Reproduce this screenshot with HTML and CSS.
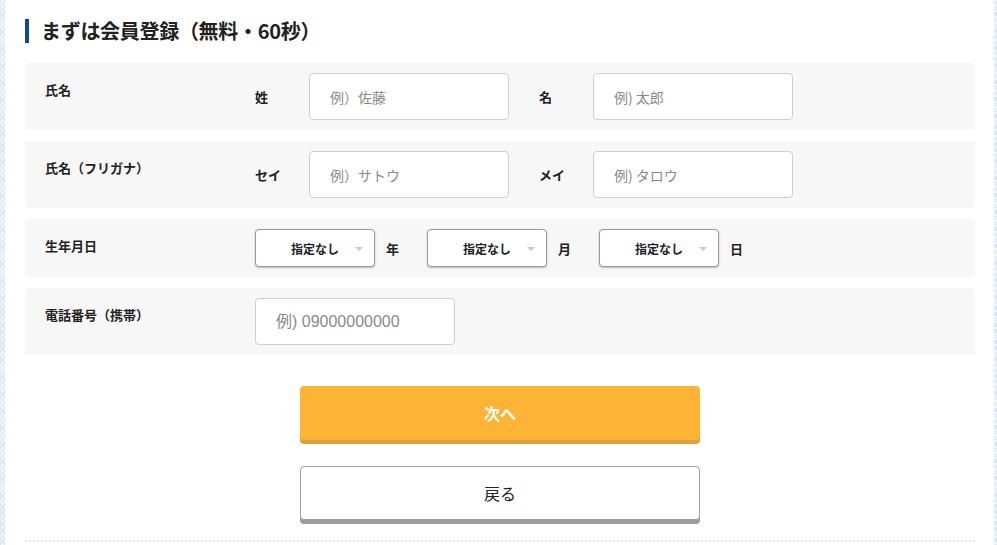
FILE: index.html
```html
<!DOCTYPE html>
<html lang="ja">
<head>
<meta charset="utf-8">
<link rel="stylesheet" href="styles.css">
</head>
<body>
<div class="page">
  <div class="edge edge-left"></div>
  <main class="content">
    <h2 class="heading">まずは会員登録（無料・60秒）</h2>
    <div class="rows">
      <div class="row">
        <div class="row-label">氏名</div>
        <div class="fields">
          <span class="sub-label">姓</span>
          <input class="text-input" type="text" placeholder="例）佐藤">
          <span class="sub-label second">名</span>
          <input class="text-input" type="text" placeholder="例) 太郎">
        </div>
      </div>
      <div class="row">
        <div class="row-label">氏名（フリガナ）</div>
        <div class="fields">
          <span class="sub-label">セイ</span>
          <input class="text-input" type="text" placeholder="例）サトウ">
          <span class="sub-label second">メイ</span>
          <input class="text-input" type="text" placeholder="例) タロウ">
        </div>
      </div>
      <div class="row">
        <div class="row-label">生年月日</div>
        <div class="fields">
          <div class="select"><span>指定なし</span><i class="caret"></i></div>
          <span class="unit">年</span>
          <div class="select"><span>指定なし</span><i class="caret"></i></div>
          <span class="unit">月</span>
          <div class="select"><span>指定なし</span><i class="caret"></i></div>
          <span class="unit">日</span>
        </div>
      </div>
      <div class="row">
        <div class="row-label">電話番号（携帯）</div>
        <div class="fields">
          <input class="text-input phone" type="text" placeholder="例) 09000000000">
        </div>
      </div>
    </div>
    <div class="actions">
      <button class="btn btn-next">次へ</button>
      <button class="btn btn-back">戻る</button>
    </div>
    <div class="dots"></div>
  </main>
  <div class="edge edge-right"></div>
</div>
</body>
</html>
```

FILE: styles.css
```css
html, body {
  margin: 0;
  padding: 0;
  background: #fff;
}
body {
  font-family: "Noto Sans CJK JP", "Noto Sans", sans-serif;
  color: #222;
}
.page {
  display: flex;
  width: 997px;
  height: 545px;
  overflow: hidden;
}
.edge {
  flex: none;
  background-color: #f1f6fd;
  background-image:
    repeating-linear-gradient(45deg, #d6e5f8 0 1px, transparent 1px 4px),
    repeating-linear-gradient(-45deg, #d6e5f8 0 1px, transparent 1px 4px);
}
.edge-left { width: 5px; }
.edge-right { width: 3px; margin-left: auto; }
.content {
  width: 950px;
  padding: 0 0 0 20px;
  display: flex;
  flex-direction: column;
}
.heading {
  margin: 19px 0 0 0;
  height: 24px;
  border-left: 4px solid #0e4a98;
  padding-left: 12px;
  font-size: 20px;
  line-height: 24px;
  font-weight: 700;
  color: #222;
  letter-spacing: -0.3px;
}
.rows {
  margin-top: 20px;
  display: flex;
  flex-direction: column;
  gap: 11px;
}
.row {
  display: flex;
  background: #f7f7f7;
  border-radius: 4px;
  padding: 10px 0 10px 20px;
}
.row-label {
  width: 210px;
  flex: none;
  padding-top: 7px;
  font-size: 13px;
  line-height: 20px;
  font-weight: 700;
  color: #222;
}
.fields {
  display: flex;
  align-items: center;
}
.sub-label {
  width: 54px;
  flex: none;
  font-size: 13px;
  font-weight: 700;
  color: #222;
}
.sub-label.second { margin-left: 30px; }
.text-input {
  box-sizing: border-box;
  width: 200px;
  height: 47px;
  border: 1px solid #cfcfcf;
  border-radius: 4px;
  background: #fff;
  padding: 0 0 0 20px;
  font-family: inherit;
  font-size: 14px;
  color: #333;
  outline: none;
}
.text-input.phone {
  font-family: "Liberation Sans", "Noto Sans CJK JP", sans-serif;
  font-size: 16px;
}
.text-input::placeholder { color: #8a8a8a; }
.select {
  position: relative;
  box-sizing: border-box;
  width: 120px;
  height: 38px;
  border: 1px solid #9a9a9a;
  border-radius: 4px;
  background: #fff;
  box-shadow: 0 1px 2px rgba(0,0,0,0.25);
  display: flex;
  align-items: center;
  justify-content: center;
  font-size: 12px;
  font-weight: 700;
  color: #222;
}
.caret {
  position: absolute;
  right: 11px;
  top: 17px;
  width: 0;
  height: 0;
  border-left: 4px solid transparent;
  border-right: 4px solid transparent;
  border-top: 4px solid #c8c8c8;
}
.unit {
  width: 13px;
  font-size: 13px;
  font-weight: 700;
  margin: 0 28px 0 11px;
}
.actions {
  display: flex;
  flex-direction: column;
  align-items: center;
  gap: 26px;
  margin-top: 31px;
  margin-left: -20px;
  padding-left: 20px;
}
.btn {
  box-sizing: border-box;
  width: 400px;
  height: 54px;
  border-radius: 4px;
  font-family: inherit;
  font-size: 16px;
  cursor: pointer;
}
.btn-next {
  background: #fdb436;
  border: none;
  color: #fff;
  font-weight: 700;
  box-shadow: 0 4px 0 #e0a03a;
}
.btn-back {
  background: #fff;
  border: 1px solid #a0a0a0;
  color: #222;
  font-weight: 400;
  box-shadow: 0 4px 0 #9d9d9d;
}
.dots {
  margin-top: 20px;
  height: 2px;
  background-image: linear-gradient(to right, #e2e2e2 0 2px, transparent 2px 4px);
  background-size: 4px 2px;
}
```
